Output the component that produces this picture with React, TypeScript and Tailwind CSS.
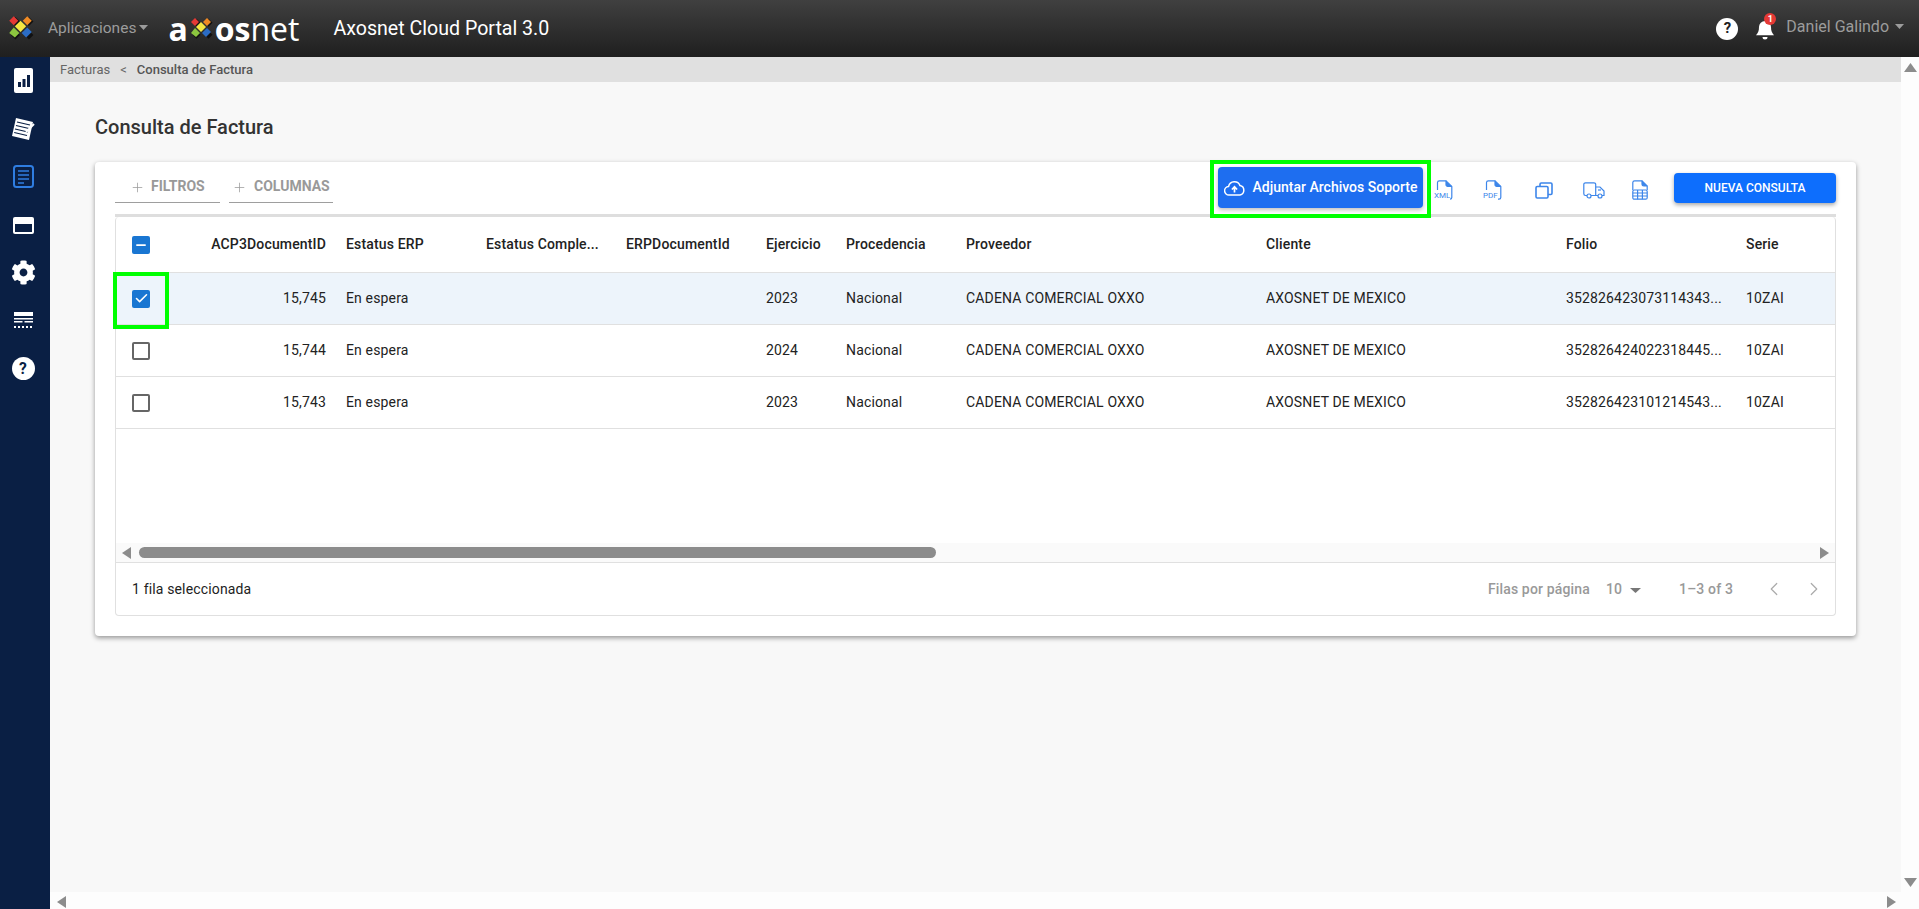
import { Check, ChevronLeft, ChevronRight, Minus, Plus } from "lucide-react";
import { FaCog } from "react-icons/fa";

const gridCols = "grid-cols-[50px_170px_140px_140px_140px_80px_120px_300px_300px_180px_1fr]";

const columns = [
  "ACP3DocumentID",
  "Estatus ERP",
  "Estatus Comple...",
  "ERPDocumentId",
  "Ejercicio",
  "Procedencia",
  "Proveedor",
  "Cliente",
  "Folio",
  "Serie",
];

const rows = [
  { id: "15,745", year: "2023", folio: "352826423073114343...", selected: true },
  { id: "15,744", year: "2024", folio: "352826424022318445...", selected: false },
  { id: "15,743", year: "2023", folio: "352826423101214543...", selected: false },
];

const LogoMark = ({ size }: { size: number }) => (
  <svg width={size} height={size} viewBox="0 0 24 24">
    <g transform="translate(1.5 1.8)" fill="#111">
      <path d="M6 0 10 4 6 8 2 4Z" />
      <path d="M18 0 22 4 18 8 14 4Z" />
      <path d="M6 12 10 16 6 20 2 16Z" />
      <path d="M18 12 22 16 18 20 14 16Z" />
    </g>
    <path d="M6 1 10 5 6 9 2 5Z" fill="#e53935" />
    <path d="M18 1 22 5 18 9 14 5Z" fill="#f08a24" />
    <path d="M12 5 17 10 12 15 7 10Z" fill="#f5e642" />
    <path d="M6 11 11 16 7 20 2 16Z" fill="#8cc63f" />
    <path d="M18 11 22 15 17 20 13 16Z" fill="#2b6cc4" />
  </svg>
);

const HelpCircle = ({ size, color }: { size: number; color: string }) => (
  <div
    className="flex items-center justify-center rounded-full bg-white font-bold"
    style={{ width: size, height: size, color, fontSize: size * 0.68 }}
  >
    ?
  </div>
);

const SideIcon = ({ kind }: { kind: string }) => {
  if (kind === "chart")
    return (
      <svg width="19" height="25" viewBox="0 0 19 25">
        <rect width="19" height="25" rx="2" fill="#fff" />
        <rect x="4" y="14" width="3" height="5" fill="#0a1f44" />
        <rect x="8.5" y="11" width="3" height="8" fill="#0a1f44" />
        <rect x="13" y="7" width="3" height="12" fill="#0a1f44" />
      </svg>
    );
  if (kind === "notes")
    return (
      <svg width="24" height="24" viewBox="0 0 24 24">
        <path d="M5 1 22 5 18 23 1 19Z" fill="#fff" />
        <path d="M6 5 19 8M5 8.5 18 11.5M4 12 17 15M3.2 15.5 16 18.5" stroke="#0a1f44" strokeWidth="1.2" />
        <path d="M15 15 23 7" stroke="#fff" strokeWidth="2" />
      </svg>
    );
  if (kind === "doc")
    return (
      <svg width="21" height="23" viewBox="0 0 21 23" fill="none" stroke="#2f7de1">
        <rect x="1" y="1" width="19" height="21" rx="2.5" strokeWidth="2" />
        <path d="M5 6H16M5 10H16M5 14H16M5 18H11" strokeWidth="1.6" />
      </svg>
    );
  if (kind === "card")
    return (
      <svg width="21" height="17" viewBox="0 0 21 17">
        <rect x="0" y="0" width="21" height="17" rx="2" fill="#fff" />
        <rect x="2" y="7" width="17" height="8" fill="#0a1f44" />
      </svg>
    );
  if (kind === "gear") return <FaCog size={25} color="#fff" />;
  if (kind === "table")
    return (
      <svg width="19" height="16" viewBox="0 0 19 16" fill="#fff">
        <rect width="19" height="4" />
        <rect y="6" width="19" height="1.5" />
        <rect y="9" width="8.5" height="1.5" />
        <rect x="10.5" y="9" width="8.5" height="1.5" />
        <path d="M0 14h2v2H0zM4 14h2v2H4zM8 14h2v2H8zM12 14h2v2h-2zM16 14h2v2h-2z" />
      </svg>
    );
  return <HelpCircle size={23} color="#0a1f44" />;
};

const FileLabelIcon = ({ label }: { label: string }) => (
  <div className="relative h-[20px] w-[18px]">
    <svg width="18" height="20" viewBox="0 0 18 20" fill="none" stroke="#3d86ea" strokeWidth="1.2">
      <path d="M2.5 10V2.5A1.8 1.8 0 0 1 4.3.8H11L16.8 6.4V17.5A1.8 1.8 0 0 1 15 19.2H13.5" />
      <path d="M11 .8V4.5A1.8 1.8 0 0 0 12.8 6.4H16.8" fill="#3d86ea" />
    </svg>
    <span className="absolute bottom-[0px] left-[-1px] bg-white text-[8px] leading-[8px] text-[#3d86ea]">{label}</span>
  </div>
);

const IconCopy = () => (
  <svg width="18" height="17" viewBox="0 0 18 17" fill="none" stroke="#3d86ea" strokeWidth="1.6">
    <rect x="5" y="1" width="12" height="11.5" rx="1.2" />
    <rect x="1" y="4.5" width="12" height="11.5" rx="1.2" fill="#fff" />
  </svg>
);

const IconTruck = () => (
  <svg width="22" height="17" viewBox="0 0 22 17" fill="none" stroke="#3d86ea" strokeWidth="1.2">
    <path d="M4 13.5H2.5A1.7 1.7 0 0 1 .8 11.8V2.5A1.7 1.7 0 0 1 2.5.8H11A1.7 1.7 0 0 1 12.7 2.5V13.5H8" />
    <path d="M12.7 5H17L21 9V13.5H19M15 13.5H12.7" />
    <path d="M15 8H18" />
    <circle cx="6" cy="14" r="2" />
    <circle cx="17" cy="14" r="2" />
  </svg>
);

const IconSheet = () => (
  <svg width="16" height="20" viewBox="0 0 16 20" fill="none" stroke="#3d86ea" strokeWidth="1.2">
    <path d="M.8 10V2.5A1.8 1.8 0 0 1 2.6.8H10L15.2 6V10" />
    <path d="M10 .8V4.2A1.8 1.8 0 0 0 11.8 6H15.2" fill="#3d86ea" />
    <rect x=".8" y="10" width="14.4" height="9.2" rx="1.5" />
    <path d="M.8 13H15.2M.8 16H15.2M5.6 10V19.2M10.4 10V19.2" />
  </svg>
);

const IconCloud = () => (
  <svg width="21" height="16" viewBox="0 0 21 16" fill="none" stroke="#fff" strokeWidth="1.5">
    <path d="M5.2 15A4.3 4.3 0 0 1 4.6 6.4 6 6 0 0 1 16 5.6 4.8 4.8 0 0 1 16 15Z" />
    <path d="M10.5 12.5V7M7.9 9.5 10.5 6.8 13.1 9.5" fill="none" strokeWidth="1.7" />
  </svg>
);

const Bell = () => (
  <div className="relative h-[20px] w-[20px]">
    <svg width="20" height="20" viewBox="0 0 20 20" fill="#fff">
      <path d="M10 1a6 6 0 0 1 6 6c0 4 1 6 3 8.300H1C3 13 4 11 4 7a6 6 0 0 1 6-6Z" />
      <path d="M7.500 17h5a2.500 2.500 0 0 1-5 0Z" />
    </svg>
    <span className="absolute right-[-1px] top-[-7px] flex h-[12px] w-[12px] items-center justify-center rounded-full bg-[#e53935] text-[9px] font-bold leading-none text-white">
      1
    </span>
  </div>
);

const Caret = ({ color }: { color: string }) => (
  <svg width="9" height="5" viewBox="0 0 9 5">
    <path d="M0 0H9L4.500 5Z" fill={color} />
  </svg>
);

const ArrowH = ({ dir }: { dir: "left" | "right" }) => (
  <svg width="9" height="12" viewBox="0 0 9 12" fill="#8c8c8c">
    {dir === "left" ? <path d="M0 6 9 0V12Z" /> : <path d="M9 6 0 0V12Z" />}
  </svg>
);

const ArrowV = ({ dir }: { dir: "up" | "down" }) => (
  <svg width="13" height="9" viewBox="0 0 13 9" fill="#8c8c8c">
    {dir === "up" ? <path d="M6.500 0 13 9H0Z" /> : <path d="M6.500 9 13 0H0Z" />}
  </svg>
);

const FilterTab = ({ label, className }: { label: string; className: string }) => (
  <div className={`flex h-[41px] items-center border-b border-[#9e9e9e] pt-[8px] ${className}`}>
    <Plus size={15} strokeWidth={1.2} color="#9a9a9a" className="mt-[3px]" />
    <span className="text-[14px] font-bold text-[#999]">{label}</span>
  </div>
);

export default function App() {
  return (
    <div className="flex h-[909px] w-[1919px] flex-col overflow-hidden bg-[#f8f8f8] font-['Roboto',sans-serif] text-[14px] text-[#222]">
      {/* barra superior */}
      <header className="flex h-[57px] shrink-0 items-center bg-gradient-to-b from-[#404040] to-[#1f1f1f] pl-[7px]">
        <LogoMark size={27} />
        <span className="ml-[14px] text-[15.500px] text-[#9c9c9c]">Aplicaciones</span>
        <span className="ml-[3px] mb-[2px]"><Caret color="#9c9c9c" /></span>
        <div className="ml-[20px] flex w-[134px] items-center font-['Open_Sans',sans-serif] text-[32px] leading-none text-white">
          <span className="font-bold">a</span>
          <span className="ml-[1px]"><LogoMark size={24} /></span>
          <span className="ml-[2px] font-bold [clip-path:polygon(60%_0,100%_0,100%_100%,0_100%,0_55%)]">o</span>
          <span className="font-bold">s</span>
          <span>net</span>
        </div>
        <span className="ml-[31px] text-[19.600px] text-white">Axosnet Cloud Portal 3.0</span>
        <div className="ml-auto flex items-center pr-[15px]">
          <HelpCircle size={22} color="#222" />
          <div className="ml-[17px] mt-[3px]"><Bell /></div>
          <span className="ml-[11px] mb-[4px] text-[16px] text-[#9c9c9c]">Daniel Galindo</span>
          <span className="ml-[6px] mb-[4px]"><Caret color="#9c9c9c" /></span>
        </div>
      </header>

      <div className="flex min-h-0 flex-1">
        <aside className="flex w-[50px] shrink-0 flex-col items-center bg-[#0a1f44] pr-[4px] pt-[11px]">
          <div className="flex h-[25px] items-center"><SideIcon kind="chart" /></div>
          <div className="mt-[24px] flex h-[24px] items-center"><SideIcon kind="notes" /></div>
          <div className="mt-[24px] flex h-[23px] items-center"><SideIcon kind="doc" /></div>
          <div className="mt-[29px] flex h-[17px] items-center"><SideIcon kind="card" /></div>
          <div className="mt-[26px] flex h-[25px] items-center"><SideIcon kind="gear" /></div>
          <div className="mt-[27px] flex h-[16px] items-center"><SideIcon kind="table" /></div>
          <div className="mt-[29px] flex h-[23px] items-center"><SideIcon kind="help" /></div>
        </aside>

        <div className="flex min-w-0 flex-1 flex-col">
          <div className="flex min-h-0 flex-1">
            <main className="min-w-0 flex-1">
              <nav className="flex h-[25px] items-center bg-[#e0e0e0] pl-[10px] text-[13px] text-[#666]">
                <span>Facturas</span>
                <span className="ml-[10px]">&lt;</span>
                <span className="ml-[10px] font-medium text-[#555]">Consulta de Factura</span>
              </nav>
              <h1 className="ml-[45px] mt-[33px] text-[20px] font-medium leading-[24px] text-[#333]">Consulta de Factura</h1>

              <section className="relative ml-[45px] mt-[23px] h-[474px] w-[1761px] rounded-[4px] bg-white px-[20px] shadow-[0_2px_5px_rgba(0,0,0,0.4)]">
                <div className="flex h-[52px] items-start">
                  <div className="flex gap-[9px]">
                    <FilterTab label="FILTROS" className="w-[105px] gap-[6px] pl-[15px]" />
                    <FilterTab label="COLUMNAS" className="w-[104px] gap-[7px] pl-[3px]" />
                  </div>
                  <div className="ml-auto flex items-start pt-[5px]">
                    <button className="flex h-[41px] w-[205px] items-center justify-center gap-[8px] rounded-[4px] bg-[#1e6ef0] text-[14px] font-medium text-white shadow-[0_2px_4px_rgba(0,0,0,0.25)]">
                      <IconCloud />
                      Adjuntar Archivos Soporte
                    </button>
                    <div className="ml-[12px] mt-[13px] w-[31px]"><FileLabelIcon label="XML" /></div>
                    <div className="ml-[18px] mt-[13px] w-[33px]"><FileLabelIcon label="PDF" /></div>
                    <div className="ml-[18px] mt-[15px] w-[30px]"><IconCopy /></div>
                    <div className="ml-[18px] mt-[15px] w-[31px]"><IconTruck /></div>
                    <div className="ml-[18px] mt-[13px] w-[16px]"><IconSheet /></div>
                    <button className="ml-[26px] mt-[6px] h-[30px] w-[162px] rounded-[4px] bg-[#0d6efd] text-[12px] font-medium text-white shadow-[0_2px_4px_rgba(0,0,0,0.35)]">
                      NUEVA CONSULTA
                    </button>
                  </div>
                </div>
                <div className="h-[3px] bg-[#dedede]" />

                <div className="h-[399px] overflow-hidden rounded-[4px] border border-t-0 border-[#e0e0e0] tracking-[0.15px]">
                  <div className={`grid h-[56px] items-center border-b border-[#e0e0e0] font-medium ${gridCols}`}>
                    <div className="flex justify-center">
                      <div className="flex h-[18px] w-[18px] items-center justify-center rounded-[2px] bg-[#1976d2]">
                        <Minus size={14} strokeWidth={3} color="#fff" />
                      </div>
                    </div>
                    {columns.map((c, i) => (
                      <div key={c} className={`px-[10px] ${i === 0 ? "text-right" : ""}`}>{c}</div>
                    ))}
                  </div>
                  {rows.map((r) => (
                    <div
                      key={r.id}
                      className={`grid h-[52px] items-center border-b border-[#e0e0e0] ${gridCols} ${r.selected ? "bg-[#edf4fb]" : ""}`}
                    >
                      <div className="flex justify-center">
                        {r.selected ? (
                          <div className="flex h-[18px] w-[18px] items-center justify-center rounded-[2px] bg-[#1976d2]">
                            <Check size={15} strokeWidth={2.5} color="#fff" />
                          </div>
                        ) : (
                          <div className="h-[18px] w-[18px] rounded-[2px] border-2 border-[#666]" />
                        )}
                      </div>
                      <div className="px-[10px] text-right">{r.id}</div>
                      <div className="px-[10px]">En espera</div>
                      <div />
                      <div />
                      <div className="px-[10px]">{r.year}</div>
                      <div className="px-[10px]">Nacional</div>
                      <div className="px-[10px]">CADENA COMERCIAL OXXO</div>
                      <div className="px-[10px]">AXOSNET DE MEXICO</div>
                      <div className="whitespace-nowrap pl-[10px]">{r.folio}</div>
                      <div className="px-[10px]">10ZAI</div>
                    </div>
                  ))}
                  <div className="h-[114px]" />
                  <div className="flex h-[19px] items-center bg-[#fafafa] pl-[6px] pr-[6px]">
                    <ArrowH dir="left" />
                    <div className="ml-[8px] h-[11px] w-[797px] rounded-full bg-[#8c8c8c]" />
                    <div className="ml-auto flex"><ArrowH dir="right" /></div>
                  </div>
                  <div className="flex h-[52px] items-center border-t border-[#e0e0e0] pl-[16px] pr-[10px] pt-[1px]">
                    <span>1 fila seleccionada</span>
                    <div className="ml-auto flex items-center font-medium text-[#999]">
                      <span>Filas por página</span>
                      <span className="ml-[16px]">10</span>
                      <span className="ml-[8px] mt-[2px]"><svg width="11" height="5" viewBox="0 0 11 5"><path d="M0 0H11L5.500 5Z" fill="#777" /></svg></span>
                      <span className="ml-[38px]">1–3 of 3</span>
                      <span className="ml-[30px]"><ChevronLeft size={22} strokeWidth={1.3} color="#aaa" /></span>
                      <span className="ml-[18px]"><ChevronRight size={22} strokeWidth={1.3} color="#aaa" /></span>
                    </div>
                  </div>
                </div>

                {/* marcas verdes de la captura */}
                <div className="pointer-events-none absolute left-[1115px] top-[-2px] h-[58px] w-[221px] border-[4px] border-[#00ff00]" />
                <div className="pointer-events-none absolute left-[18px] top-[110px] h-[57px] w-[56px] border-[4px] border-[#00ff00]" />
              </section>
            </main>
            <div className="flex w-[18px] shrink-0 flex-col items-center justify-between bg-[#fdfdfd] pb-[5px] pt-[6px]">
              <ArrowV dir="up" />
              <ArrowV dir="down" />
            </div>
          </div>
          <div className="flex h-[17px] shrink-0 items-center justify-between bg-[#fdfdfd] pl-[7px] pr-[23px] pt-[3px]">
            <ArrowH dir="left" />
            <ArrowH dir="right" />
          </div>
        </div>
      </div>
    </div>
  );
}
